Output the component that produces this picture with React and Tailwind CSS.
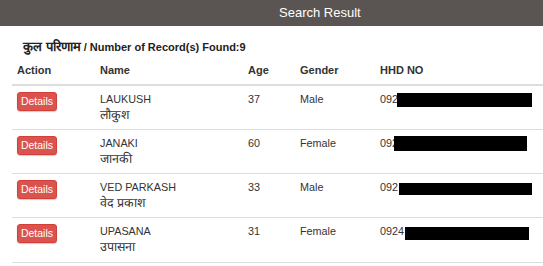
import React from "react";

const rows = [
  { en: "LAUKUSH", hi: "लौकुश", age: "37", gender: "Male", hhd: "092", h: "h-[44px]", box: { l: 22, t: 7, w: 135, h: 14 } },
  { en: "JANAKI", hi: "जानकी", age: "60", gender: "Female", hhd: "092", h: "h-[44px]", box: { l: 19, t: 6, w: 133, h: 15 } },
  { en: "VED PARKASH", hi: "वेद प्रकाश", age: "33", gender: "Male", hhd: "092", h: "h-[44px]", box: { l: 24, t: 9, w: 133, h: 12 } },
  { en: "UPASANA", hi: "उपासना", age: "31", gender: "Female", hhd: "0924", h: "h-[45px]", box: { l: 30, t: 9, w: 124, h: 13 } },
];

const grid = "grid grid-cols-[83px_148px_52px_80px_1fr]";

export default function App() {
  return (
    <div className="w-[543px] h-[266px] overflow-hidden bg-white text-[#333] font-['Liberation_Sans',Arial,sans-serif]">
      <div className="h-[26px] bg-[#5a5553] flex items-center pl-[279px] text-white text-[13px]">
        Search Result
      </div>
      <div className="h-[38px] pl-[23px] pt-[13px] font-bold text-[11px] leading-[16px] text-[#222]">
        <span className="text-[13px]">कुल परिणाम</span> / Number of Record(s) Found:9
      </div>
      <div className="ml-[12px]">
        <div className={`${grid} h-[22px] border-b-2 border-[#ddd] font-bold text-[11px] leading-[12px]`}>
          <div className="px-[5px]">Action</div>
          <div className="px-[5px]">Name</div>
          <div className="px-[5px]">Age</div>
          <div className="px-[5px]">Gender</div>
          <div className="px-[5px]">HHD NO</div>
        </div>
        {rows.map((r, i) => (
          <div key={i} className={`${grid} ${r.h} border-b border-[#ddd] text-[10.8px] leading-[15px]`}>
            <div className="px-[5px] pt-[6px]">
              <button className="w-[40px] h-[19px] bg-[#d9534f] border border-[#d43f3a] rounded-[3px] text-white text-[10.5px] leading-[17px] shadow-[0_1px_1px_rgba(0,0,0,0.2)]">
                Details
              </button>
            </div>
            <div className="px-[5px] pt-[6px]">
              <div>{r.en}</div>
              <div className="text-[12.5px] leading-[16px]">{r.hi}</div>
            </div>
            <div className="px-[5px] pt-[6px]">{r.age}</div>
            <div className="px-[5px] pt-[6px]">{r.gender}</div>
            <div className="px-[5px] pt-[6px] relative">
              {r.hhd}
              <div
                className="absolute bg-black"
                style={{ left: r.box.l, top: r.box.t, width: r.box.w, height: r.box.h }}
              />
            </div>
          </div>
        ))}
      </div>
    </div>
  );
}
